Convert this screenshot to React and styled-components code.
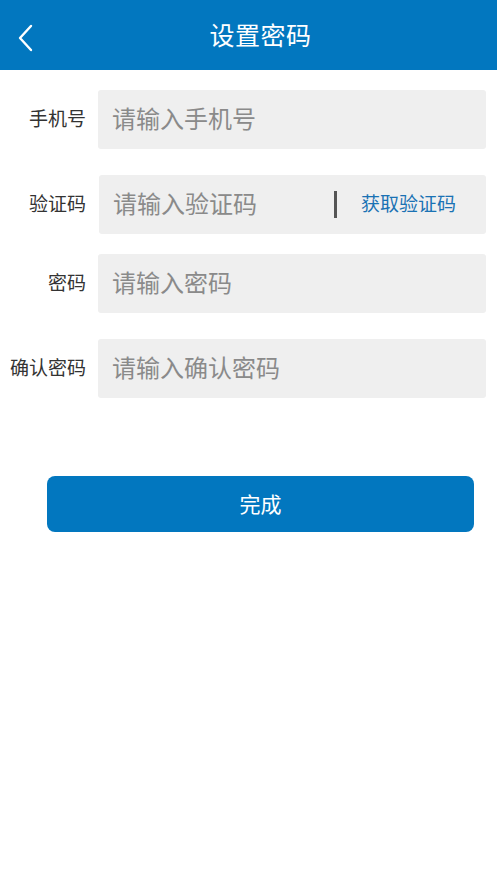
import React from "react";
import styled, { createGlobalStyle } from "styled-components";

const Global = createGlobalStyle`
  html, body { margin: 0; padding: 0; background: #fff; }
  body { font-family: "Noto Sans CJK SC", "Noto Sans", sans-serif; }
  * { box-sizing: border-box; }
`;

const Page = styled.div`
  width: 497px;
  min-height: 883px;
  background: #fff;
`;

const Header = styled.header`
  height: 70px;
  background: #0277bf;
  display: flex;
  align-items: center;
  justify-content: center;
  padding: 0 0 3px 24px;
  position: relative;
`;

const Back = styled.button`
  position: absolute;
  left: 10px;
  top: 20px;
  width: 30px;
  height: 36px;
  border: 0;
  background: transparent;
  padding: 0;
  display: flex;
  align-items: center;
  justify-content: center;
`;

const Title = styled.h1`
  margin: 0;
  color: #fff;
  font-size: 25px;
  font-weight: 400;
  letter-spacing: 0.5px;
`;

const Form = styled.div`
  display: flex;
  flex-direction: column;
  padding: 20px 11px 0 0;
`;

const Row = styled.div`
  display: flex;
  align-items: center;
  margin-top: ${(p) => p.$mt || 0}px;
`;

const Label = styled.label`
  width: 86px;
  text-align: right;
  font-size: 19px;
  color: #333;
  flex-shrink: 0;
  padding-bottom: 4px;
`;

const Field = styled.div`
  flex: 1;
  height: 59px;
  margin-left: ${(p) => p.$ml || 12}px;
  background: #efefef;
  border-radius: 3px;
  display: flex;
  align-items: center;
  padding: 0 14px 4px;
`;

const Input = styled.input`
  flex: 1;
  min-width: 0;
  border: 0;
  outline: none;
  background: transparent;
  font-family: inherit;
  font-size: 24px;
  color: #333;
  padding: 0;
  &::placeholder { color: #8a8a8a; }
`;

const Divider = styled.span`
  width: 3px;
  height: 27px;
  background: #555;
  margin: 4px 24px 0 0;
  flex-shrink: 0;
`;

const CodeLink = styled.span`
  color: #1a72b4;
  font-size: 19px;
  margin-right: 16px;
  flex-shrink: 0;
`;

const Submit = styled.button`
  margin: 78px 12px 0 47px;
  height: 56px;
  border: 0;
  border-radius: 8px;
  background: #0277bf;
  color: #fff;
  font-family: inherit;
  font-size: 21px;
  padding: 0 0 3px;
`;

export default function App() {
  return (
    <Page>
      <Global />
      <Header>
        <Back aria-label="返回">
          <svg width="18" height="30" viewBox="0 0 18 30" fill="none">
            <path d="M15 3 L4 15 L15 27" stroke="#fff" strokeWidth="2.4" strokeLinecap="round" strokeLinejoin="round" />
          </svg>
        </Back>
        <Title>设置密码</Title>
      </Header>
      <Form>
        <Row>
          <Label>手机号</Label>
          <Field><Input placeholder="请输入手机号" /></Field>
        </Row>
        <Row $mt={26}>
          <Label>验证码</Label>
          <Field $ml={13}>
            <Input placeholder="请输入验证码" />
            <Divider />
            <CodeLink>获取验证码</CodeLink>
          </Field>
        </Row>
        <Row $mt={20}>
          <Label>密码</Label>
          <Field><Input placeholder="请输入密码" /></Field>
        </Row>
        <Row $mt={26}>
          <Label>确认密码</Label>
          <Field><Input placeholder="请输入确认密码" /></Field>
        </Row>
        <Submit>完成</Submit>
      </Form>
    </Page>
  );
}
